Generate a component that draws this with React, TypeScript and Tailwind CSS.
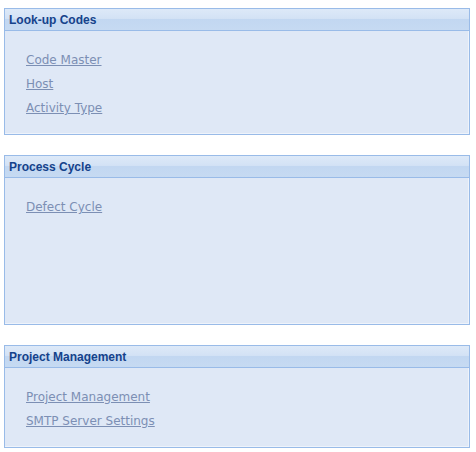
import React from "react";

type PanelProps = {
  title: string;
  links: string[];
  bodyHeight: string;
};

function Panel({ title, links, bodyHeight }: PanelProps) {
  return (
    <div className="border border-[#99bbe8]">
      {/* header */}
      <div className="relative h-[22px] border-b border-[#99bbe8] bg-[linear-gradient(to_bottom,#dde9f8_0%,#d3e2f5_45%,#c2d7f1_50%,#c6daf2_100%)]">
        <span
          className="absolute left-[4px] top-[4px] text-[12px] font-bold leading-[15px] text-[#15428b]"
          style={{ fontFamily: '"Liberation Sans", Arial, sans-serif' }}
        >
          {title}
        </span>
      </div>
      {/* body */}
      <div className={`${bodyHeight} border-b border-r border-[#eef3fb] bg-[#dfe8f6] pl-[21px] pt-[16px]`}>
        <ul className="flex flex-col">
          {links.map((l) => (
            <li key={l} className="h-[24px] leading-[24px]">
              <a href="#" className="text-[12px] text-[#7c8fb4] underline decoration-[#7c8fb4]">
                {l}
              </a>
            </li>
          ))}
        </ul>
      </div>
    </div>
  );
}

export default function App() {
  return (
    <div
      className="min-h-[452px] bg-white pl-[4px] pr-[6px] pt-[8px]"
      style={{ fontFamily: '"DejaVu Sans", "Liberation Sans", sans-serif' }}
    >
      <div className="flex flex-col gap-[20px]">
        <Panel title="Look-up Codes" links={["Code Master", "Host", "Activity Type"]} bodyHeight="h-[103px]" />
        <Panel title="Process Cycle" links={["Defect Cycle"]} bodyHeight="h-[146px]" />
        <Panel
          title="Project Management"
          links={["Project Management", "SMTP Server Settings"]}
          bodyHeight="h-[79px]"
        />
      </div>
    </div>
  );
}
